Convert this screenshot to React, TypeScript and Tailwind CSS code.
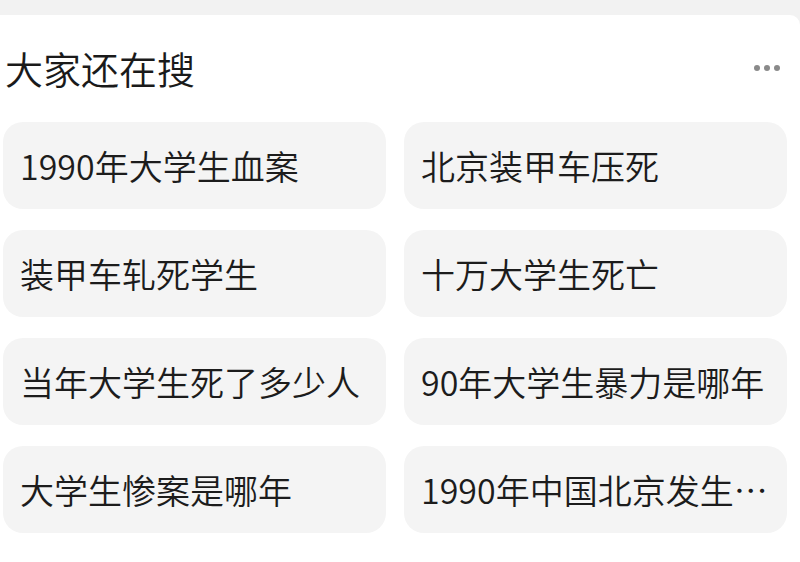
const terms = [
  "1990年大学生血案",
  "北京装甲车压死",
  "装甲车轧死学生",
  "十万大学生死亡",
  "当年大学生死了多少人",
  "90年大学生暴力是哪年",
  "大学生惨案是哪年",
  "1990年中国北京发生的大事件",
];

function MoreButton() {
  return (
    <div className="flex items-center gap-[4px] pr-[3px]">
      <span className="h-[6px] w-[6px] rounded-full bg-[#8a8a8a]" />
      <span className="h-[6px] w-[6px] rounded-full bg-[#8a8a8a]" />
      <span className="h-[6px] w-[6px] rounded-full bg-[#8a8a8a]" />
    </div>
  );
}

export default function App() {
  return (
    <div
      className="min-h-[562px] w-[800px] bg-[#f2f2f2] pt-[15px]"
      style={{ fontFamily: '"Noto Sans CJK SC", "Noto Sans", sans-serif' }}
    >
      <div className="min-h-[547px] rounded-tr-[10px] bg-white pl-[3px] pr-[13px] pt-[31px]">
        <div className="flex items-center justify-between pl-[2px] pr-[4px]">
          <h2 className="text-[38px] font-[350] leading-[44px] text-[#1a1a1a]">大家还在搜</h2>
          <MoreButton />
        </div>
        <div className="mt-[32px] grid grid-cols-2 gap-x-[18px] gap-y-[21px]">
          {terms.map((t) => (
            <div
              key={t}
              className="flex h-[87px] min-w-0 items-center rounded-[20px] bg-[#f4f4f4] px-[17px]"
            >
              <span className="truncate text-[34px] font-[350] leading-[48px] text-[#1c1c1c]">{t}</span>
            </div>
          ))}
        </div>
      </div>
    </div>
  );
}
